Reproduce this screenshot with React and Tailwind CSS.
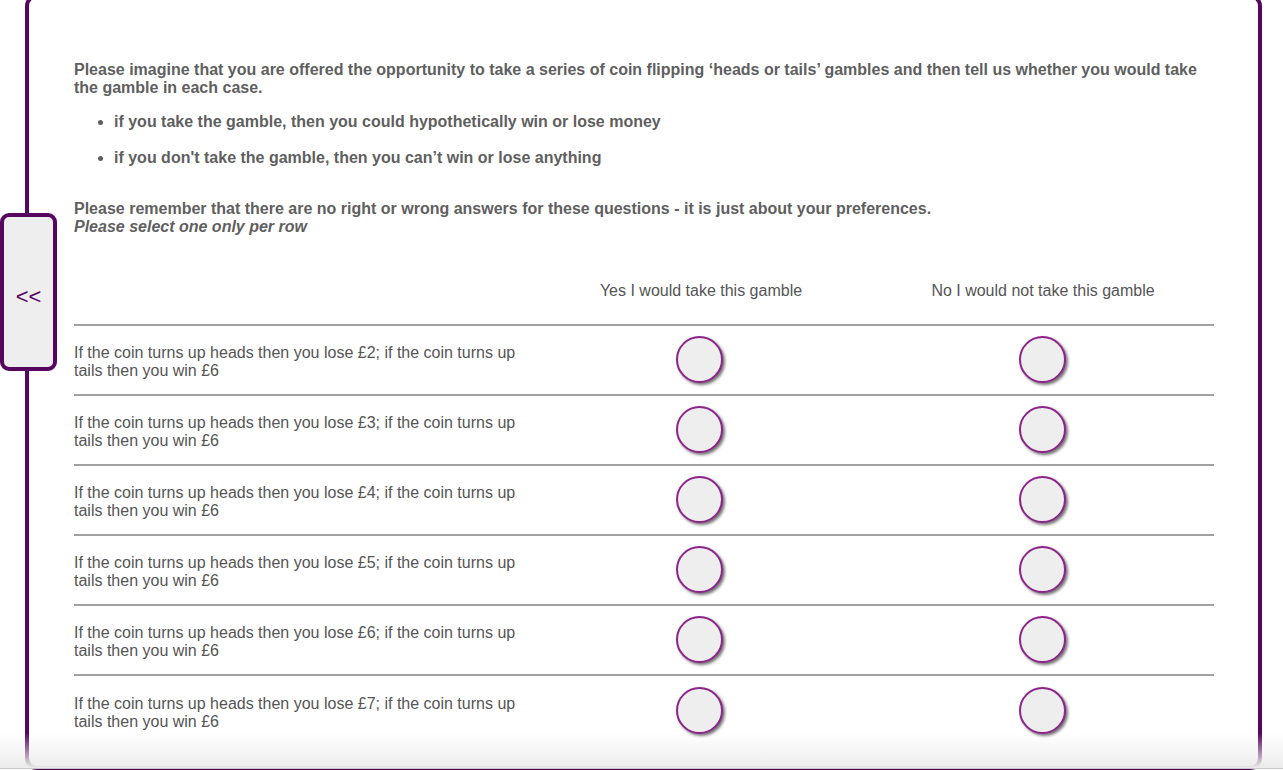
import React from "react";

const rows = [2, 3, 4, 5, 6, 7];

function Radio() {
  return (
    <div className="w-[47px] h-[47px] rounded-full border-2 border-[#8e238c] bg-[#eeeeee] shadow-[2px_2px_3px_rgba(0,0,0,0.55)]" />
  );
}

export default function App() {
  return (
    <div className="relative h-[770px] overflow-hidden bg-white font-['Liberation_Sans',Arial,sans-serif]">
      <div className="ml-[25px] mr-[21px] -mt-[6px] h-[776px] rounded-[12px] border-4 border-[#57065f] pl-[45px] pr-[44px] pt-[63px]">
        <div className="text-[16px] leading-[18px] font-bold text-[#5f5f5f]">
          <p>
            Please imagine that you are offered the opportunity to take a series of coin flipping ‘heads or tails’ gambles and then tell us whether you would take the gamble in each case.
          </p>
          <ul className="mt-[16px] flex flex-col gap-[18px] pl-[40px]">
            <li className="list-disc">if you take the gamble, then you could hypothetically win or lose money</li>
            <li className="list-disc">if you don't take the gamble, then you can’t win or lose anything</li>
          </ul>
          <p className="mt-[33px]">
            Please remember that there are no right or wrong answers for these questions - it is just about your preferences.
          </p>
          <p className="italic">Please select one only per row</p>
        </div>

        <div className="grid grid-cols-[456px_1fr_1fr] text-[16px] leading-[18px] text-[#555555]">
          <div className="h-[90px] border-b-2 border-[#a0a0a0]" />
          <div className="h-[90px] flex items-end justify-center pb-[24px] border-b-2 border-[#a0a0a0]">
            Yes I would take this gamble
          </div>
          <div className="h-[90px] flex items-end justify-center pb-[24px] border-b-2 border-[#a0a0a0]">
            No I would not take this gamble
          </div>
          {rows.map((n, i) => (
            <React.Fragment key={n}>
              <div className={"h-[70px] flex items-center pr-[10px] pt-[3px] " + (i < rows.length - 1 ? "border-b-2 border-[#a0a0a0]" : "")}>
                If the coin turns up heads then you lose £{n}; if the coin turns up tails then you win £6
              </div>
              <div className={"h-[70px] flex items-center justify-center pb-[1px] pr-[3px] " + (i < rows.length - 1 ? "border-b-2 border-[#a0a0a0]" : "")}>
                <Radio />
              </div>
              <div className={"h-[70px] flex items-center justify-center pb-[1px] pr-[1px] " + (i < rows.length - 1 ? "border-b-2 border-[#a0a0a0]" : "")}>
                <Radio />
              </div>
            </React.Fragment>
          ))}
        </div>
      </div>

      <div className="absolute left-0 top-[213px] w-[57px] h-[158px] rounded-[9px] border-4 border-[#57065f] bg-[#eeeeee] flex items-center justify-center pt-[8px] text-[22px] text-[#57065f] font-['Liberation_Sans',Arial,sans-serif]">
        &lt;&lt;
      </div>

      <div className="absolute left-0 right-0 bottom-0 h-[36px] bg-gradient-to-b from-[rgba(255,255,255,0)] to-[#ececec] border-b border-[#c8c8c8] mb-[1px]" />
    </div>
  );
}
